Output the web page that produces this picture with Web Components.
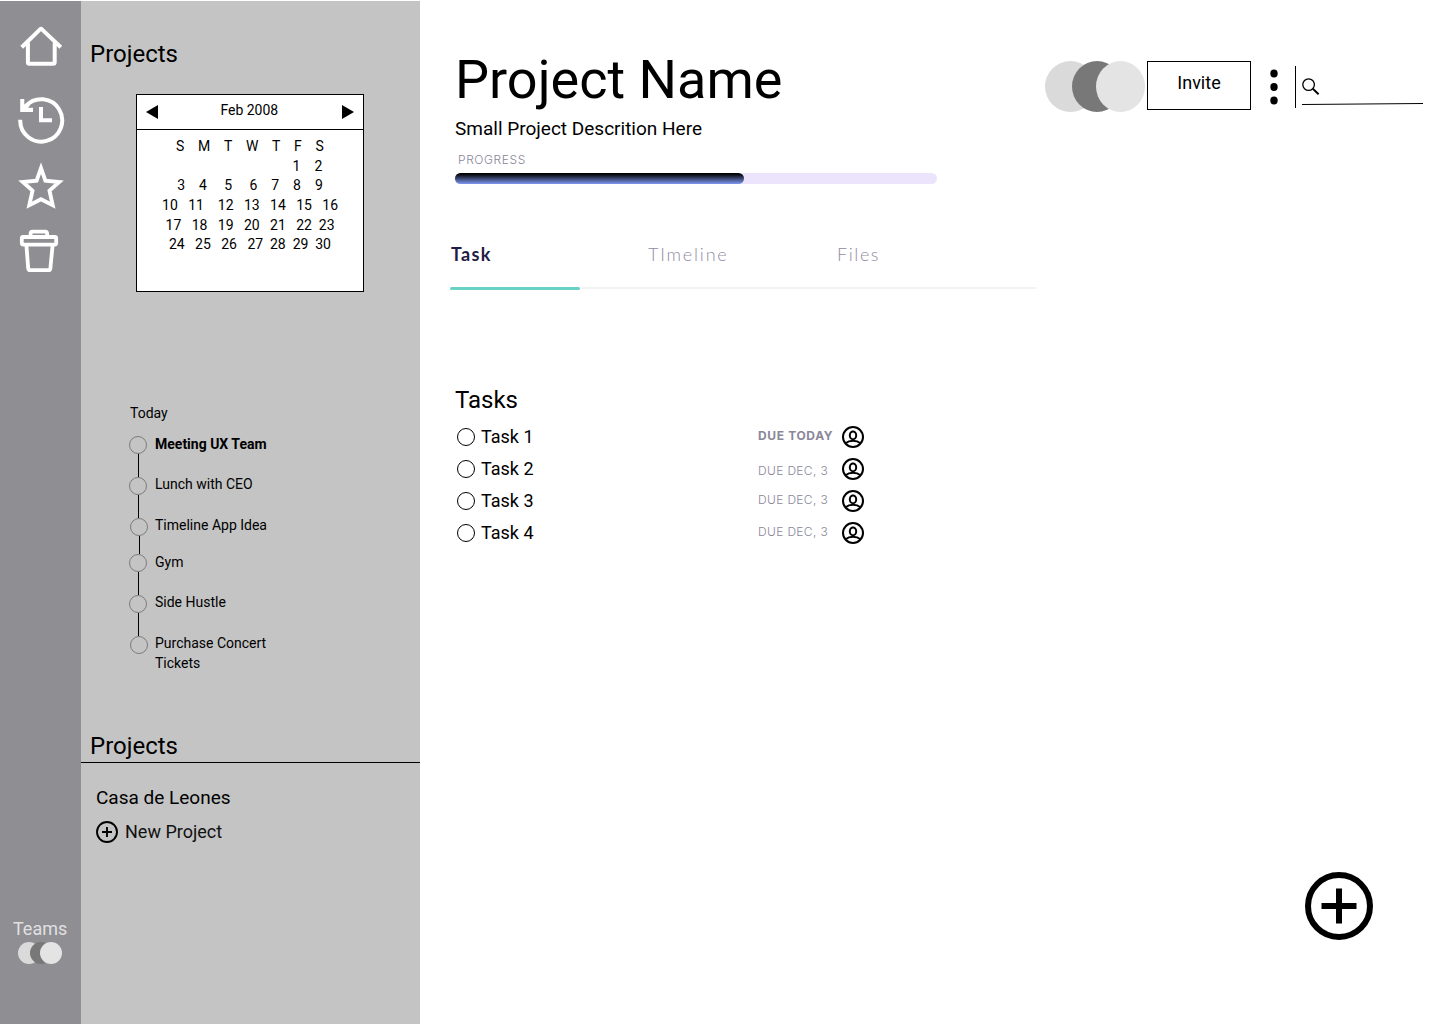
<!DOCTYPE html>
<html lang="en">
<head>
<meta charset="utf-8">
<title>Project Name</title>
<style>
html, body { margin: 0; padding: 0; background: #fff; }
body { font-family: Roboto, sans-serif; color: #000; width: 1440px; height: 1024px; overflow: hidden; }
</style>
</head>
<body>
<project-app></project-app>
<script>
function define(name, render) {
  customElements.define(name, class extends HTMLElement {
    constructor() { super(); this.attachShadow({ mode: 'open' }); }
    connectedCallback() { this.shadowRoot.innerHTML = render(this); }
  });
}

const ICONS = {
  home: ['17 20 48 60', '<g fill="none" stroke="#fff" stroke-width="4" stroke-linecap="round" stroke-linejoin="round"><path stroke-linecap="butt" d="M21.7 47.2 L39.8 29.6 Q41 28.4 42.2 29.6 L60.8 47.2"/><path d="M27.9 43.5V62.2Q27.9 63.8 29.5 63.8H53Q54.7 63.8 54.7 62.2V43.5"/></g>'],
  history: ['17 80 48 70', '<g fill="none" stroke="#fff" stroke-width="4"><path d="M20.2 119.8A21 21.2 0 1 0 25.8 106"/><path d="M41 107V120.3H52"/></g><path fill="#fff" d="M20.2 99H24.3V104.8L27 102.6 30 105.6 27.9 107.8H33V112H20.2Z"/>'],
  star: ['17 150 48 70', '<path fill="none" stroke="#fff" stroke-width="3.9" stroke-miterlimit="6" d="M41 168.2L45.4 180.6 59.2 182 49.5 190.6 52.7 205.2 41 199.2 29.3 205.2 32.5 190.6 22.8 182 36.6 180.6Z"/>'],
  trash: ['17 220 48 70', '<g fill="none" stroke="#fff" stroke-width="3.8" stroke-linejoin="round"><rect x="21.8" y="237" width="34.4" height="7.6" rx="1.5"/><path d="M30.6 237V233.5Q30.6 231.6 32.5 231.6H45.2Q47.1 231.6 47.1 233.5V237"/><path d="M26.4 245L28.2 268.3Q28.4 270.2 30.2 270.2H48.4Q50.2 270.2 50.4 268.3L52.6 245"/></g>'],
  add: ['0 0 22 22', '<g fill="none" stroke="#000" stroke-width="1.9"><circle cx="11" cy="11" r="10"/><path d="M11 6V16M6 11H16"/></g>'],
  fab: ['0 0 68 68', '<g fill="none" stroke="#000" stroke-width="6"><circle cx="34" cy="34" r="31"/><path d="M34 16.5V51.5M16.5 34H51.5"/></g>'],
  user: ['0 0 22 22', '<g fill="none" stroke="#000" stroke-width="2"><circle cx="11" cy="11" r="10"/><ellipse cx="11" cy="9.4" rx="3.2" ry="3.8"/><path d="M3.6 17.2Q6.5 14.8 11 14.8T18.4 17.2"/></g>'],
  search: ['0 0 18 18', '<g fill="none" stroke="#000"><circle cx="6.6" cy="6.6" r="5.8" stroke-width="1.3"/><path stroke-width="1.9" d="M10.8 10.8L16.6 16.2"/></g>'],
  more: ['0 0 8 36', '<ellipse cx="4" cy="4.4" rx="3.7" ry="4"/><ellipse cx="4" cy="17.9" rx="3.7" ry="4"/><ellipse cx="4" cy="31.4" rx="3.7" ry="4"/>']
};
define('ui-icon', el => {
  const [box, body] = ICONS[el.getAttribute('name')];
  const [, , w, h] = box.split(' ');
  return `<style>:host{display:block;flex:none;width:${w}px;height:${h}px}svg{display:block}</style>
  <svg width="${w}" height="${h}" viewBox="${box}">${body}</svg>`;
});

define('member-stack', el => {
  const small = el.hasAttribute('small');
  return `<style>:host{display:block;flex:none}svg{display:block}</style>` + (small
    ? `<svg width="44" height="22"><circle cx="11" cy="11" r="11" fill="#dadada"/><circle cx="23" cy="11" r="11" fill="#787878"/><circle cx="33" cy="11" r="11" fill="#e4e4e4"/></svg>`
    : `<svg width="100" height="51"><ellipse cx="25.5" cy="25.5" rx="25.5" ry="25.5" fill="#dadada"/><ellipse cx="52" cy="25.5" rx="25" ry="25.5" fill="#787878"/><ellipse cx="75.5" cy="25.5" rx="24.5" ry="25.5" fill="#e4e4e4"/></svg>`);
});

define('nav-rail', () => `<style>
  :host{display:flex;flex-direction:column;flex:none;width:81px;height:1023px;box-sizing:border-box;padding:19px 0 60px;background:#8e8e93}
  .icons{display:flex;flex-direction:column;padding-left:17px}
  .teams{margin-top:auto;color:#e0e0e2;font-size:18px;line-height:24px;padding-left:13px;margin-bottom:1px}
  member-stack{padding-left:18px}
  </style>
  <div class="icons"><ui-icon name="home"></ui-icon><ui-icon name="history"></ui-icon><ui-icon name="star"></ui-icon><ui-icon name="trash"></ui-icon></div>
  <div class="teams">Teams</div><member-stack small></member-stack>`);

// Every week lists its day labels with the left edge of each label inside the card.
const WEEKS = [
  [['S', 39], ['M', 61], ['T', 87], ['W', 109], ['T', 135], ['F', 157], ['S', 178.5]],
  [['1', 155.5], ['2', 177.5]],
  [['3', 40.3], ['4', 62], ['5', 87.3], ['6', 112.5], ['7', 134.3], ['8', 156], ['9', 178]],
  [['10', 25.1], ['11', 51.2], ['12', 80.8], ['13', 107], ['14', 133.1], ['15', 159.2], ['16', 185.4]],
  [['17', 28.6], ['18', 54.7], ['19', 80.8], ['20', 107], ['21', 133.1], ['22', 159.2], ['23', 181.9]],
  [['24', 32], ['25', 58.1], ['26', 84.2], ['27', 110.4], ['28', 133], ['29', 155.7], ['30', 178.3]]
];
define('mini-calendar', () => `<style>
  :host{display:flex;flex-direction:column;box-sizing:border-box;width:228px;height:198px;border:1px solid #000;background:#fff;font-size:14px}
  header{display:flex;align-items:center;justify-content:space-between;height:34px;border-bottom:1px solid #000;padding:0 9px}
  header span{line-height:20px;margin:-4px 1.4px 0 0}
  svg{display:block}
  .weeks{padding-top:7px}
  .week{display:flex;line-height:19.7px;height:19.7px;white-space:nowrap}
  </style>
  <header><svg width="12" height="14"><path d="M12 0V14L0 7Z"/></svg><span>Feb 2008</span><svg width="12" height="14"><path d="M0 0V14L12 7Z"/></svg></header>
  <div class="weeks">${WEEKS.map(w => `<div class="week" style="padding-left:${w[0][1]}px">${w.map(([t, x], i) =>
    `<span style="width:${i < w.length - 1 ? w[i + 1][1] - x : 20}px">${t}</span>`).join('')}</div>`).join('')}</div>`);

define('agenda-item', el => `<style>
  :host{display:flex;height:${el.getAttribute('h')}px;font-size:14px;line-height:20px}
  .mark{display:flex;flex-direction:column;width:18px;flex:none;padding-left:${el.getAttribute('dx') || 0}px;margin-right:${8 - (el.getAttribute('dx') || 0)}px}
  .dot{width:18px;height:18px;box-sizing:border-box;border:1px solid #7c7c7c;border-radius:50%;flex:none}
  .line{flex:1;width:1px;background:#000;margin-left:9px}
  .text{margin-top:${el.getAttribute('dy')}px;width:130px;${el.hasAttribute('bold') ? 'font-weight:700' : ''}}
  </style><div class="mark"><div class="dot"></div>${el.hasAttribute('last') ? '' : '<div class="line"></div>'}</div><div class="text"><slot></slot></div>`);

define('side-panel', () => `<style>
  :host{display:flex;flex-direction:column;flex:none;width:339px;height:1023px;background:#c4c4c4}
  h2{margin:0;font-weight:400;font-size:24px;line-height:28px;padding-left:9px}
  h2.first{padding-top:39px}
  mini-calendar{margin:26px 0 0 55px}
  .today{font-size:14px;line-height:20px;margin:111px 0 13px 49px}
  .agenda{padding-left:48px;height:296px}
  .second{border-bottom:1px solid #000;height:30px}
  .name{font-size:19px;line-height:24px;margin:23px 0 0 15px}
  .new{display:flex;align-items:center;gap:7px;font-size:18px;line-height:22px;margin:11px 0 0 15px;color:#111}
  </style>
  <h2 class="first">Projects</h2>
  <mini-calendar></mini-calendar>
  <div class="today">Today</div>
  <div class="agenda">
    <agenda-item h="41" dy="-2" bold>Meeting UX Team</agenda-item>
    <agenda-item h="41" dy="-3">Lunch with CEO</agenda-item>
    <agenda-item h="36" dy="-3" dx="1">Timeline App Idea</agenda-item>
    <agenda-item h="41" dy="-2">Gym</agenda-item>
    <agenda-item h="41" dy="-3">Side Hustle</agenda-item>
    <agenda-item h="40" dy="-3" dx="1" last>Purchase Concert Tickets</agenda-item>
  </div>
  <h2 class="second">Projects</h2>
  <div class="name">Casa de Leones</div>
  <div class="new"><ui-icon name="add"></ui-icon><span>New Project</span></div>`);

define('project-header', () => `<style>
  :host{display:flex;justify-content:space-between;align-items:flex-start}
  h1{margin:1px 0 0;font-weight:400;font-size:54px;line-height:66px}
  .desc{font-size:19px;line-height:24px;margin-top:4px}
  .label{font:300 12px/16px Inter,sans-serif;color:#8a8799;letter-spacing:.6px;margin:11px 0 5px 3px}
  .bar{width:482px;height:11px;border-radius:5.5px;background:#ece4fd}
  .fill{width:289px;height:11px;border-radius:5.5px;background:linear-gradient(#000 8%,#7f98f2 100%)}
  .tools{display:flex;align-items:flex-start;padding:15px 16px 0 0}
  .invite{box-sizing:border-box;width:104px;height:49px;border:1px solid #000;margin-left:2px;text-align:center;font-size:18px;line-height:41px}
  .more{margin:8px 17px 0 19px}
  .divider{width:1px;height:42px;background:#000;margin:5px 6px 0 0}
  .search{width:122px;padding-top:17px}
  .search svg{display:block;margin-top:7px}
  </style>
  <div><h1>Project Name</h1><div class="desc">Small Project Descrition Here</div>
    <div class="label">PROGRESS</div><div class="bar"><div class="fill"></div></div></div>
  <div class="tools"><member-stack></member-stack><div class="invite">Invite</div>
    <ui-icon class="more" name="more"></ui-icon><div class="divider"></div>
    <div class="search"><ui-icon name="search"></ui-icon><svg width="122" height="3"><path d="M0 1.5L121 .5" stroke="#000" stroke-width="1"/></svg></div></div>`);

define('tab-bar', () => `<style>
  :host{display:block;width:586px}
  .tabs{display:flex;font:300 18px/24px Lato,sans-serif;color:#8f8ca3;letter-spacing:1.8px}
  .tabs span:nth-child(1){width:197px;padding-left:1px;font-weight:700;color:#1f1c45;letter-spacing:1.3px}
  .tabs span:nth-child(2){width:189px}
  .tabs span:nth-child(3){letter-spacing:1.6px}
  .track{display:flex;align-items:center;margin-top:20px;height:4px}
  .on{width:130px;height:3px;border-radius:1.5px;background:#69d2c6}
  .off{flex:1;height:2px;background:#f3f3f4}
  </style><div class="tabs"><span>Task</span><span>TImeline</span><span>Files</span></div>
  <div class="track"><div class="on"></div><div class="off"></div></div>`);

define('task-row', el => `<style>
  :host{display:flex;align-items:center;height:32px;font-size:18px;line-height:24px}
  .check{width:18px;height:18px;box-sizing:border-box;border:1.2px solid #000;border-radius:50%;margin:0 6px 0 2px}
  .name{width:277px}
  .due{width:84px;font:${el.hasAttribute('today') ? 700 : 300} 12px/16px Inter,sans-serif;color:#8a8799;white-space:nowrap;letter-spacing:${el.hasAttribute('today') ? '.65px' : '.35px'};padding-bottom:${el.getAttribute('up') || 0}px;padding-top:${el.getAttribute('down') || 0}px}
  </style><div class="check"></div><div class="name"><slot></slot></div><div class="due">${el.getAttribute('due')}</div><ui-icon name="user"></ui-icon>`);

define('task-list', () => `<style>:host{display:block}
  h2{margin:0 0 7px;font-weight:400;font-size:24px;line-height:28px}</style>
  <h2>Tasks</h2>
  <task-row due="DUE TODAY" today up="2">Task 1</task-row>
  <task-row due="DUE DEC, 3" down="4">Task 2</task-row>
  <task-row due="DUE DEC, 3" up="2">Task 3</task-row>
  <task-row due="DUE DEC, 3" up="2">Task 4</task-row>`);

define('project-app', () => `<style>
  :host{display:flex;width:1440px;height:1024px;box-sizing:border-box;padding-top:1px}
  main{flex:1;display:flex;flex-direction:column;box-sizing:border-box;padding:45px 0 84px 35px}
  tab-bar{margin:58px 0 0 -5px}
  task-list{margin-top:96px}
  .fab{margin:auto 67px 0 auto}
  </style>
  <nav-rail></nav-rail><side-panel></side-panel>
  <main><project-header></project-header><tab-bar></tab-bar><task-list></task-list><ui-icon class="fab" name="fab"></ui-icon></main>`);
</script>
</body>
</html>
